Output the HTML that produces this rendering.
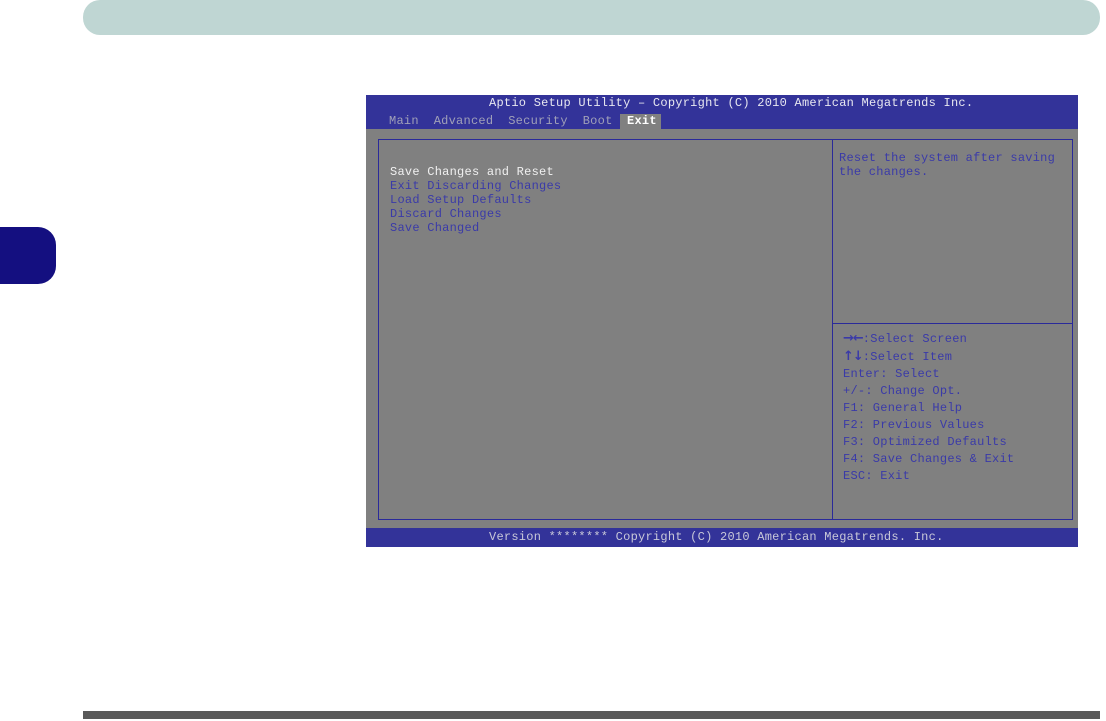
<!DOCTYPE html>
<html><head><style>
body{margin:0;width:1106px;height:721px;background:#fff;position:relative;overflow:hidden;font-family:"Liberation Mono",monospace;}
.a{position:absolute}
.t{position:absolute;font-size:12px;letter-spacing:0.25px;white-space:pre;line-height:14px;color:#3a3aa8}
.ar{font-family:"DejaVu Sans",sans-serif;font-size:13px;font-weight:bold;letter-spacing:-1px}
</style></head><body>
<div class="a" style="left:83px;top:0;width:1017px;height:35px;background:#bfd6d3;border-radius:17px"></div>
<div class="a" style="left:-20px;top:227px;width:76px;height:57px;background:#140f80;border-radius:18px"></div>
<div class="a" style="left:83px;top:711px;width:1017px;height:8px;background:#5a5a5a"></div>

<div class="a" style="left:366px;top:95px;width:712px;height:452px;background:#808080"></div>
<div class="a" style="left:366px;top:95px;width:712px;height:34px;background:#333399"></div>
<div class="a" style="left:620px;top:114px;width:41px;height:15px;background:#808080"></div>
<div class="a" style="left:366px;top:528px;width:712px;height:19px;background:#333399"></div>
<div class="a" style="left:378px;top:139px;width:693px;height:379px;border:1px solid #2a2a9a"></div>
<div class="a" style="left:832px;top:140px;width:1px;height:379px;background:#2a2a9a"></div>
<div class="a" style="left:833px;top:323px;width:239px;height:1px;background:#2a2a9a"></div>

<div class="t" style="left:489px;top:96px;color:#e8e8f0">Aptio Setup Utility – Copyright (C) 2010 American Megatrends Inc.</div>
<div class="t" style="left:389px;top:114px;color:#a0a0b8">Main  Advanced  Security  Boot</div>
<div class="t" style="left:627px;top:114px;color:#fff;font-weight:bold">Exit</div>

<div class="t" style="left:390px;top:165px;color:#f0f0f0">Save Changes and Reset</div>
<div class="t" style="left:390px;top:179px">Exit Discarding Changes</div>
<div class="t" style="left:390px;top:193px">Load Setup Defaults</div>
<div class="t" style="left:390px;top:207px">Discard Changes</div>
<div class="t" style="left:390px;top:221px">Save Changed</div>

<div class="t" style="left:839px;top:151px">Reset the system after saving
the changes.</div>

<div class="t" style="left:843px;top:330px;line-height:17px"><span class="ar">→←</span>:Select Screen
<span class="ar">↑↓</span>:Select Item
Enter: Select
+/-: Change Opt.
F1: General Help
F2: Previous Values
F3: Optimized Defaults
F4: Save Changes &amp; Exit
ESC: Exit</div>

<div class="t" style="left:489px;top:530px;color:#c8c8d8">Version ******** Copyright (C) 2010 American Megatrends. Inc.</div>
</body></html>
